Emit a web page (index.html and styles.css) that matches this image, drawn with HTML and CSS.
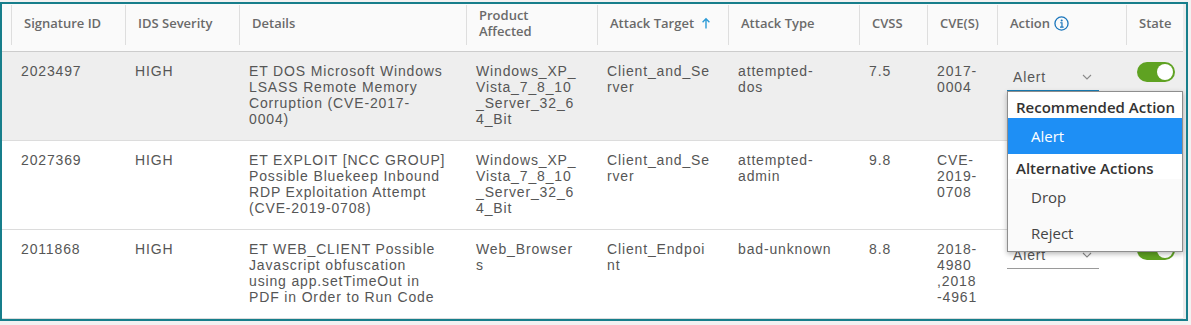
FILE: index.html
```html
<!DOCTYPE html>
<html lang="en">
<head>
<meta charset="utf-8">
<title>IDS Signatures</title>
<link rel="stylesheet" href="styles.css">
</head>
<body>
<div class="frame">
  <div class="grid">
    <div class="row head">
      <div class="hc c0"></div>
      <div class="hc">Signature ID</div>
      <div class="hc">IDS Severity</div>
      <div class="hc">Details</div>
      <div class="hc">Product<br>Affected</div>
      <div class="hc">Attack Target<svg class="sort" width="10" height="12" viewBox="0 0 10 12"><path d="M5 11.5V1.8M1.6 5.2L5 1.8 8.4 5.2" fill="none" stroke="#2b9ad6" stroke-width="1.4"/></svg></div>
      <div class="hc">Attack Type</div>
      <div class="hc">CVSS</div>
      <div class="hc">CVE(S)</div>
      <div class="hc">Action<svg class="info" width="15" height="15" viewBox="0 0 16 16"><circle cx="8" cy="8" r="7" fill="none" stroke="#1b76bc" stroke-width="1.4"/><circle cx="8.2" cy="4.7" r="1.1" fill="#1b76bc"/><path d="M6.6 7.2H8.5V11.6M6.4 11.8H10.3" fill="none" stroke="#1b76bc" stroke-width="1.3"/></svg></div>
      <div class="hc">State</div>
    </div>

    <div class="row active">
      <div class="bc c0"></div>
      <div class="bc">2023497</div>
      <div class="bc">HIGH</div>
      <div class="bc">ET DOS Microsoft Windows<br>LSASS Remote Memory<br>Corruption (CVE-2017-<br>0004)</div>
      <div class="bc">Windows_XP_<br>Vista_7_8_10<br>_Server_32_6<br>4_Bit</div>
      <div class="bc">Client_and_Se<br>rver</div>
      <div class="bc">attempted-<br>dos</div>
      <div class="bc">7.5</div>
      <div class="bc">2017-<br>0004</div>
      <div class="bc act">
        <div class="sel focus"><span>Alert</span><svg class="chev" width="10" height="6" viewBox="0 0 10 6"><path d="M1 1L5 5 9 1" fill="none" stroke="#8a8a8a" stroke-width="1.1"/></svg>
          <div class="menu">
            <div class="grp g1">Recommended Action</div>
            <div class="opt on">Alert</div>
            <div class="grp g2">Alternative Actions</div>
            <div class="opt alt">Drop</div>
            <div class="opt alt">Reject</div>
          </div>
        </div>
      </div>
      <div class="bc st"><div class="tog"><div class="knob"></div></div></div>
    </div>

    <div class="row">
      <div class="bc c0"></div>
      <div class="bc">2027369</div>
      <div class="bc">HIGH</div>
      <div class="bc">ET EXPLOIT [NCC GROUP]<br>Possible Bluekeep Inbound<br>RDP Exploitation Attempt<br>(CVE-2019-0708)</div>
      <div class="bc">Windows_XP_<br>Vista_7_8_10<br>_Server_32_6<br>4_Bit</div>
      <div class="bc">Client_and_Se<br>rver</div>
      <div class="bc">attempted-<br>admin</div>
      <div class="bc">9.8</div>
      <div class="bc">CVE-<br>2019-<br>0708</div>
      <div class="bc act"><div class="sel"><span>Alert</span><svg class="chev" width="10" height="6" viewBox="0 0 10 6"><path d="M1 1L5 5 9 1" fill="none" stroke="#8a8a8a" stroke-width="1.1"/></svg></div></div>
      <div class="bc st"><div class="tog"><div class="knob"></div></div></div>
    </div>

    <div class="row">
      <div class="bc c0"></div>
      <div class="bc">2011868</div>
      <div class="bc">HIGH</div>
      <div class="bc">ET WEB_CLIENT Possible<br>Javascript obfuscation<br>using app.setTimeOut in<br>PDF in Order to Run Code</div>
      <div class="bc">Web_Browser<br>s</div>
      <div class="bc">Client_Endpoi<br>nt</div>
      <div class="bc">bad-unknown</div>
      <div class="bc">8.8</div>
      <div class="bc">2018-<br>4980<br>,2018<br>-4961</div>
      <div class="bc act"><div class="sel"><span>Alert</span><svg class="chev" width="10" height="6" viewBox="0 0 10 6"><path d="M1 1L5 5 9 1" fill="none" stroke="#8a8a8a" stroke-width="1.1"/></svg></div></div>
      <div class="bc st"><div class="tog"><div class="knob"></div></div></div>
    </div>
  </div>
  <div class="track"></div>
</div>
</body>
</html>
```

FILE: styles.css
```css
html, body {
  margin: 0;
  background: #f2f2f2;
  font-family: "Liberation Sans", Arial, sans-serif;
}

.frame {
  margin-top: 2px;
  width: 1188px;
  height: 319px;
  box-sizing: border-box;
  border: 2px solid #177e8b;
  background: #fff;
  display: flex;
  overflow: hidden;
}

.grid {
  width: 1181px;
  flex: none;
}

.track {
  width: 3px;
  background: #ececec;
}

.row {
  display: grid;
  grid-template-columns: 9px 114px 114px 227px 131px 131px 131px 68px 70px 129px 57px;
  border-bottom: 1px solid #dcdcdc;
}

.head {
  background: #fafafa;
  border-bottom-color: #cccccc;
  height: 48px;
  box-sizing: border-box;
}

.hc {
  position: relative;
  display: flex;
  align-items: center;
  padding: 0 8px 9px 13px;
  font-family: "Open Sans", "Liberation Sans", sans-serif;
  font-size: 13px;
  font-weight: 600;
  line-height: 16px;
  color: #6a6a6a;
}

.hc::before {
  content: "";
  position: absolute;
  left: 0;
  top: 1px;
  width: 1px;
  height: 40px;
  background: #dedede;
}

.hc.c0::before {
  display: none;
}

.sort {
  margin-left: 7px;
  flex: none;
}

.info {
  margin-left: 4px;
  flex: none;
}

.active {
  background: #eeeeee;
}

.bc {
  padding: 11px 8px 13px 10px;
  font-size: 14px;
  line-height: 16px;
  letter-spacing: 0.85px;
  color: #565656;
  white-space: nowrap;
}

.bc.c0 {
  padding: 0;
}

.bc.act {
  padding: 11px 0 0 10px;
}

.bc.st {
  padding: 10px 0 0 11px;
}

.sel {
  position: relative;
  width: 92px;
  box-sizing: border-box;
  display: flex;
  justify-content: space-between;
  align-items: center;
  padding: 6px 7px 5px 6px;
  border-bottom: 1px solid #9a9a9a;
}

.sel.focus {
  border-bottom-color: #1a7db5;
}

.chev {
  flex: none;
}

.tog {
  width: 38px;
  height: 20px;
  box-sizing: border-box;
  border-radius: 10px;
  background: #5fa222;
  display: flex;
  justify-content: flex-end;
  align-items: center;
  padding: 2px;
}

.knob {
  width: 16px;
  height: 16px;
  border-radius: 50%;
  background: #ffffff;
}

.menu {
  position: absolute;
  left: 0;
  top: calc(100% + 1px);
  width: 176px;
  box-sizing: border-box;
  border: 1px solid #8e8e8e;
  background: #ffffff;
  box-shadow: 0 2px 5px rgba(0, 0, 0, 0.28);
  z-index: 5;
  font-family: "Open Sans", "Liberation Sans", sans-serif;
  font-size: 15px;
  line-height: 20px;
  letter-spacing: 0;
  white-space: nowrap;
}

.grp {
  padding-left: 8px;
  font-weight: 600;
  color: #333333;
}

.grp.g1 {
  height: 26px;
  box-sizing: border-box;
  padding-top: 5px;
}

.grp.g2 {
  height: 25px;
  box-sizing: border-box;
  padding-top: 4px;
}

.opt {
  height: 36px;
  display: flex;
  align-items: center;
  padding-left: 23px;
  color: #454545;
}

.opt.on {
  background: #1e8ff5;
  color: #ffffff;
}

.opt.alt {
  background: #fafafa;
}
```
